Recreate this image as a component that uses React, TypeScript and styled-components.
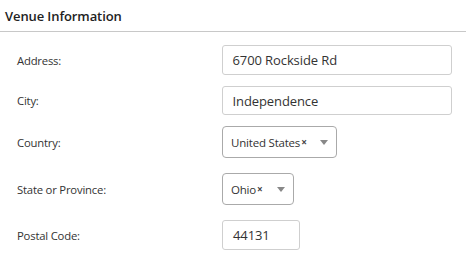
import styled, { createGlobalStyle } from "styled-components"

const GlobalStyle = createGlobalStyle`
  html, body {
    margin: 0;
    padding: 0;
    background: #fff;
    font-family: "Open Sans", "Noto Sans", sans-serif;
    color: #333;
  }
`

const Panel = styled.section`
  width: 466px;
`

const Header = styled.h2`
  margin: 0;
  height: 31px;
  padding: 0 0 0 5px;
  display: flex;
  align-items: center;
  font-size: 13px;
  font-weight: 600;
  color: #222;
  letter-spacing: -0.1px;
  border-bottom: 1px solid #c8c8c8;
`

const Form = styled.div`
  padding: 13px 14px 0 17px;
  display: flex;
  flex-direction: column;
`

const Row = styled.div<{ $gap: number }>`
  display: flex;
  align-items: center;
  margin-top: ${p => p.$gap}px;
`

const Label = styled.label`
  width: 205px;
  font-size: 11.3px;
  color: #333;
  letter-spacing: -0.2px;
`

const TextInput = styled.div<{ $w: number; $h: number }>`
  box-sizing: border-box;
  width: ${p => p.$w}px;
  height: ${p => p.$h}px;
  border: 1px solid #cfcfcf;
  border-radius: 3px;
  padding: 0 10px;
  display: flex;
  align-items: center;
  font-size: 13px;
  color: #333;
  letter-spacing: -0.1px;
`

const Select = styled.div<{ $w: number }>`
  box-sizing: border-box;
  width: ${p => p.$w}px;
  height: 32px;
  border: 1px solid #aaa;
  border-radius: 4px;
  padding: 0 8px;
  display: flex;
  align-items: center;
  font-size: 11.5px;
  color: #333;
  letter-spacing: -0.2px;
`

const Clear = styled.span`
  font-size: 10px;
  font-weight: 700;
  color: #444;
  margin-left: 1px;
`

const Arrow = styled.span`
  margin-left: auto;
  width: 0;
  height: 0;
  border-left: 4px solid transparent;
  border-right: 4px solid transparent;
  border-top: 5px solid #888;
`

export default function App() {
  return (
    <Panel>
      <GlobalStyle />
      <Header>Venue Information</Header>
      <Form>
        <Row $gap={0}>
          <Label>Address:</Label>
          <TextInput $w={231} $h={30}>6700 Rockside Rd</TextInput>
        </Row>
        <Row $gap={11}>
          <Label>City:</Label>
          <TextInput $w={231} $h={29}>Independence</TextInput>
        </Row>
        <Row $gap={11}>
          <Label>Country:</Label>
          <Select $w={115}>
            United States<Clear>×</Clear>
            <Arrow />
          </Select>
        </Row>
        <Row $gap={15}>
          <Label>State or Province:</Label>
          <Select $w={72}>
            Ohio<Clear>×</Clear>
            <Arrow />
          </Select>
        </Row>
        <Row $gap={15}>
          <Label>Postal Code:</Label>
          <TextInput $w={78} $h={30}>44131</TextInput>
        </Row>
      </Form>
    </Panel>
  )
}
